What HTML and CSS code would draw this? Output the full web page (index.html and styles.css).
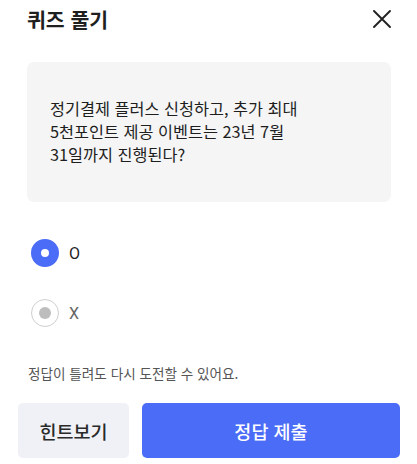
FILE: index.html
```html
<!DOCTYPE html>
<html lang="ko">
<head>
<meta charset="utf-8">
<link rel="stylesheet" href="styles.css">
</head>
<body>
<div class="page">
  <header class="header">
    <h1 class="title">퀴즈 풀기</h1>
    <button class="close" aria-label="닫기">
      <svg width="18" height="18" viewBox="0 0 18 18"><path d="M1 1 L17 17 M17 1 L1 17" stroke="#222" stroke-width="1.9" fill="none" stroke-linecap="round"/></svg>
    </button>
  </header>
  <div class="question">
    <p>정기결제 플러스 신청하고, 추가 최대<br>5천포인트 제공 이벤트는 23년 7월<br>31일까지 진행된다?</p>
  </div>
  <div class="options">
    <label class="option">
      <span class="radio checked"></span>
      <span class="opt-text">O</span>
    </label>
    <label class="option">
      <span class="radio"><span class="dot"></span></span>
      <span class="opt-text muted">X</span>
    </label>
  </div>
  <p class="help">정답이 틀려도 다시 도전할 수 있어요.</p>
  <div class="actions">
    <button class="btn hint">힌트보기</button>
    <button class="btn submit">정답 제출</button>
  </div>
</div>
</body>
</html>
```
FILE: styles.css
```css
* { box-sizing: border-box; }
html, body { margin: 0; padding: 0; background: #fff; }
body {
  font-family: "Noto Sans CJK KR", "Noto Sans", sans-serif;
  color: #222;
  width: 417px;
}
.header {
  height: 38px;
  padding: 0 26px 0 27px;
  display: flex;
  align-items: center;
  justify-content: space-between;
}
.title {
  margin: 0;
  font-size: 20.5px;
  line-height: 24px;
  font-weight: 700;
  color: #1f1f1f;
}
.close {
  border: 0;
  background: none;
  padding: 0;
  width: 18px;
  height: 18px;
  display: flex;
}
.question {
  margin: 24px 26px 0 27px;
  background: #f5f5f5;
  border-radius: 7px;
  height: 140px;
  padding: 35px 23px 0;
}
.question p {
  margin: 0;
  font-size: 16.3px;
  line-height: 23px;
  color: #1e1e1e;
}
.options {
  margin-top: 37px;
  padding-left: 31px;
  display: flex;
  flex-direction: column;
  gap: 32px;
}
.option {
  display: flex;
  align-items: center;
  gap: 10px;
  height: 28px;
}
.radio {
  width: 28px;
  height: 28px;
  border-radius: 50%;
  border: 1.5px solid #cfcfcf;
  display: flex;
  align-items: center;
  justify-content: center;
  flex: none;
}
.radio.checked {
  border: 10px solid #4a6cf7;
}
.dot {
  width: 12px;
  height: 12px;
  border-radius: 50%;
  background: #bdbdbd;
}
.opt-text {
  font-family: "Roboto", "Noto Sans", sans-serif;
  font-size: 16px;
  color: #222;
}
.opt-text.muted { color: #666; }
.help {
  margin: 37px 0 0 28px;
  font-size: 13.6px;
  line-height: 18px;
  color: #555;
}
.actions {
  margin-top: 21px;
  padding: 0 17px 0 18px;
  display: flex;
  gap: 13px;
}
.btn {
  height: 55px;
  border: 0;
  border-radius: 5px;
  font-family: "Noto Sans CJK KR", "Noto Sans", sans-serif;
  font-size: 18.5px;
  font-weight: 500;
}
.hint {
  width: 111px;
  background: #f0f1f6;
  color: #2a2a2a;
}
.submit {
  flex: 1;
  background: #4a6cf7;
  color: #fff;
}
```
